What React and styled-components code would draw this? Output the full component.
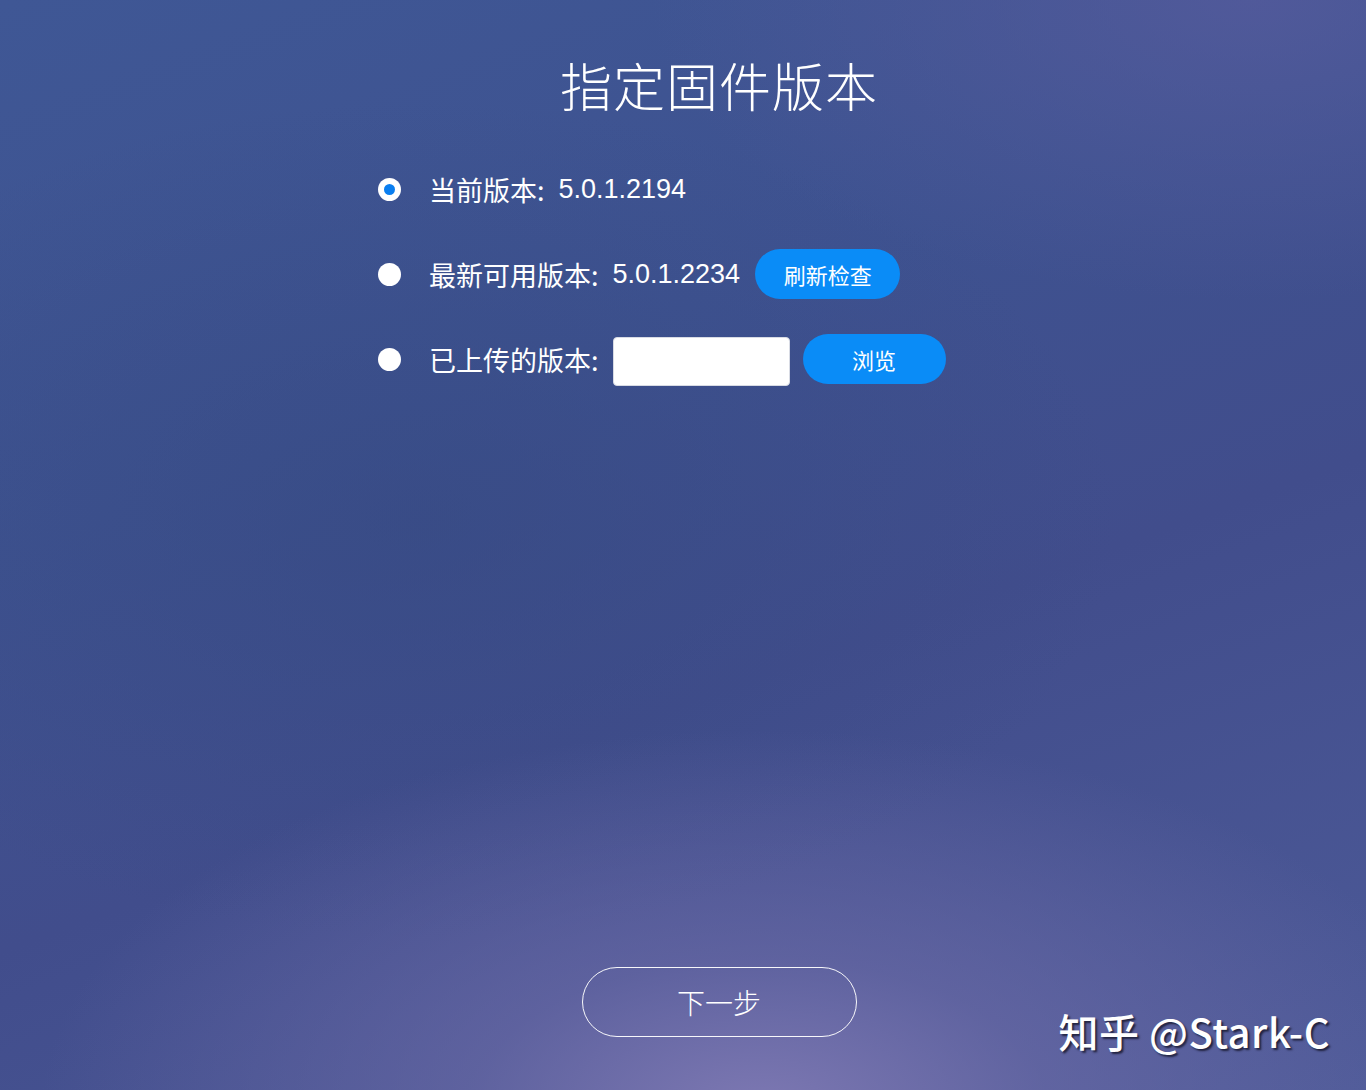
import React, { useState } from "react";
import styled, { createGlobalStyle } from "styled-components";

const Global = createGlobalStyle`
  html, body { margin: 0; padding: 0; }
  body {
    font-family: "Liberation Sans", "Noto Sans CJK SC", sans-serif;
    color: #fff;
  }
`;

const Page = styled.div`
  position: relative;
  width: 1366px;
  height: 1090px;
  overflow: hidden;
  background:
    radial-gradient(ellipse 720px 380px at 760px 1110px, rgba(128,122,180,0.95) 0%, rgba(110,108,168,0.6) 40%, rgba(90,95,155,0) 100%),
    radial-gradient(ellipse 600px 300px at 1250px 0px, rgba(88,92,158,0.7) 0%, rgba(88,92,158,0) 100%),
    radial-gradient(ellipse 700px 420px at 420px 520px, rgba(52,72,128,0.55) 0%, rgba(52,72,128,0) 100%),
    linear-gradient(160deg, #3f5795 0%, #3e5290 35%, #414d8c 60%, #4d5a98 100%);
  display: flex;
  flex-direction: column;
`;

const Main = styled.main`
  margin-left: 378px;
  width: 682px;
  display: flex;
  flex-direction: column;
  flex: 1;
`;

const Title = styled.h1`
  margin: 52px 0 0;
  text-align: center;
  font-family: "Noto Sans CJK SC", sans-serif;
  font-weight: 300;
  font-size: 52px;
  line-height: 66px;
  letter-spacing: 1px;
`;

const Options = styled.div`
  margin-top: 46px;
  display: flex;
  flex-direction: column;
  gap: 35px;
`;

const Row = styled.label`
  display: flex;
  align-items: center;
  height: 50px;
  cursor: pointer;
`;

const Radio = styled.span`
  width: 23px;
  height: 23px;
  border-radius: 50%;
  background: #fff;
  flex: none;
  display: flex;
  align-items: center;
  justify-content: center;
  margin-right: 28px;
  &::after {
    content: "";
    width: ${p => (p.$checked ? "11px" : "0")};
    height: ${p => (p.$checked ? "11px" : "0")};
    border-radius: 50%;
    background: #0a7ef0;
  }
`;

const Label = styled.span`
  font-family: "Noto Sans CJK SC", sans-serif;
  font-size: 27px;
  white-space: nowrap;
`;

const Version = styled.span`
  font-family: "Liberation Sans", sans-serif;
  font-size: 27px;
  margin-left: 14px;
  white-space: nowrap;
`;

const PillButton = styled.button`
  height: 50px;
  width: ${p => p.$w}px;
  margin-left: ${p => p.$ml}px;
  border: none;
  border-radius: 25px;
  background: #0a8cf7;
  color: #fff;
  font-family: "Noto Sans CJK SC", sans-serif;
  font-size: 22px;
  cursor: pointer;
  flex: none;
`;

const FileInput = styled.input`
  margin-left: 14px;
  width: 177px;
  height: 49px;
  box-sizing: border-box;
  border: 1px solid #d8dbe4;
  border-radius: 4px;
  background: #fff;
  flex: none;
  margin-top: 4px;
`;

const Footer = styled.div`
  margin-top: auto;
  margin-bottom: 53px;
  display: flex;
  justify-content: center;
`;

const NextButton = styled.button`
  width: 275px;
  height: 70px;
  border: 1.5px solid rgba(255,255,255,0.95);
  border-radius: 35px;
  background: transparent;
  color: #fff;
  font-family: "Noto Sans CJK SC", sans-serif;
  font-size: 28px;
  font-weight: 300;
  cursor: pointer;
`;

const Watermark = styled.div`
  position: absolute;
  right: 36px;
  bottom: 30px;
  font-family: "Noto Sans CJK SC", sans-serif;
  font-size: 40px;
  font-weight: 500;
  color: #fff;
  text-shadow: 2px 2px 2px rgba(20,20,40,0.8);
  white-space: nowrap;
  letter-spacing: 0.5px;
`;

export default function App() {
  const [sel, setSel] = useState(0);
  return (
    <Page>
      <Global />
      <Main>
        <Title>指定固件版本</Title>
        <Options>
          <Row onClick={() => setSel(0)}>
            <Radio $checked={sel === 0} />
            <Label>当前版本:</Label>
            <Version>5.0.1.2194</Version>
          </Row>
          <Row onClick={() => setSel(1)}>
            <Radio $checked={sel === 1} />
            <Label>最新可用版本:</Label>
            <Version>5.0.1.2234</Version>
            <PillButton $w={145} $ml={15}>刷新检查</PillButton>
          </Row>
          <Row onClick={() => setSel(2)}>
            <Radio $checked={sel === 2} />
            <Label>已上传的版本:</Label>
            <FileInput type="text" readOnly />
            <PillButton $w={143} $ml={13}>浏览</PillButton>
          </Row>
        </Options>
        <Footer>
          <NextButton>下一步</NextButton>
        </Footer>
      </Main>
      <Watermark>知乎 @Stark-C</Watermark>
    </Page>
  );
}
